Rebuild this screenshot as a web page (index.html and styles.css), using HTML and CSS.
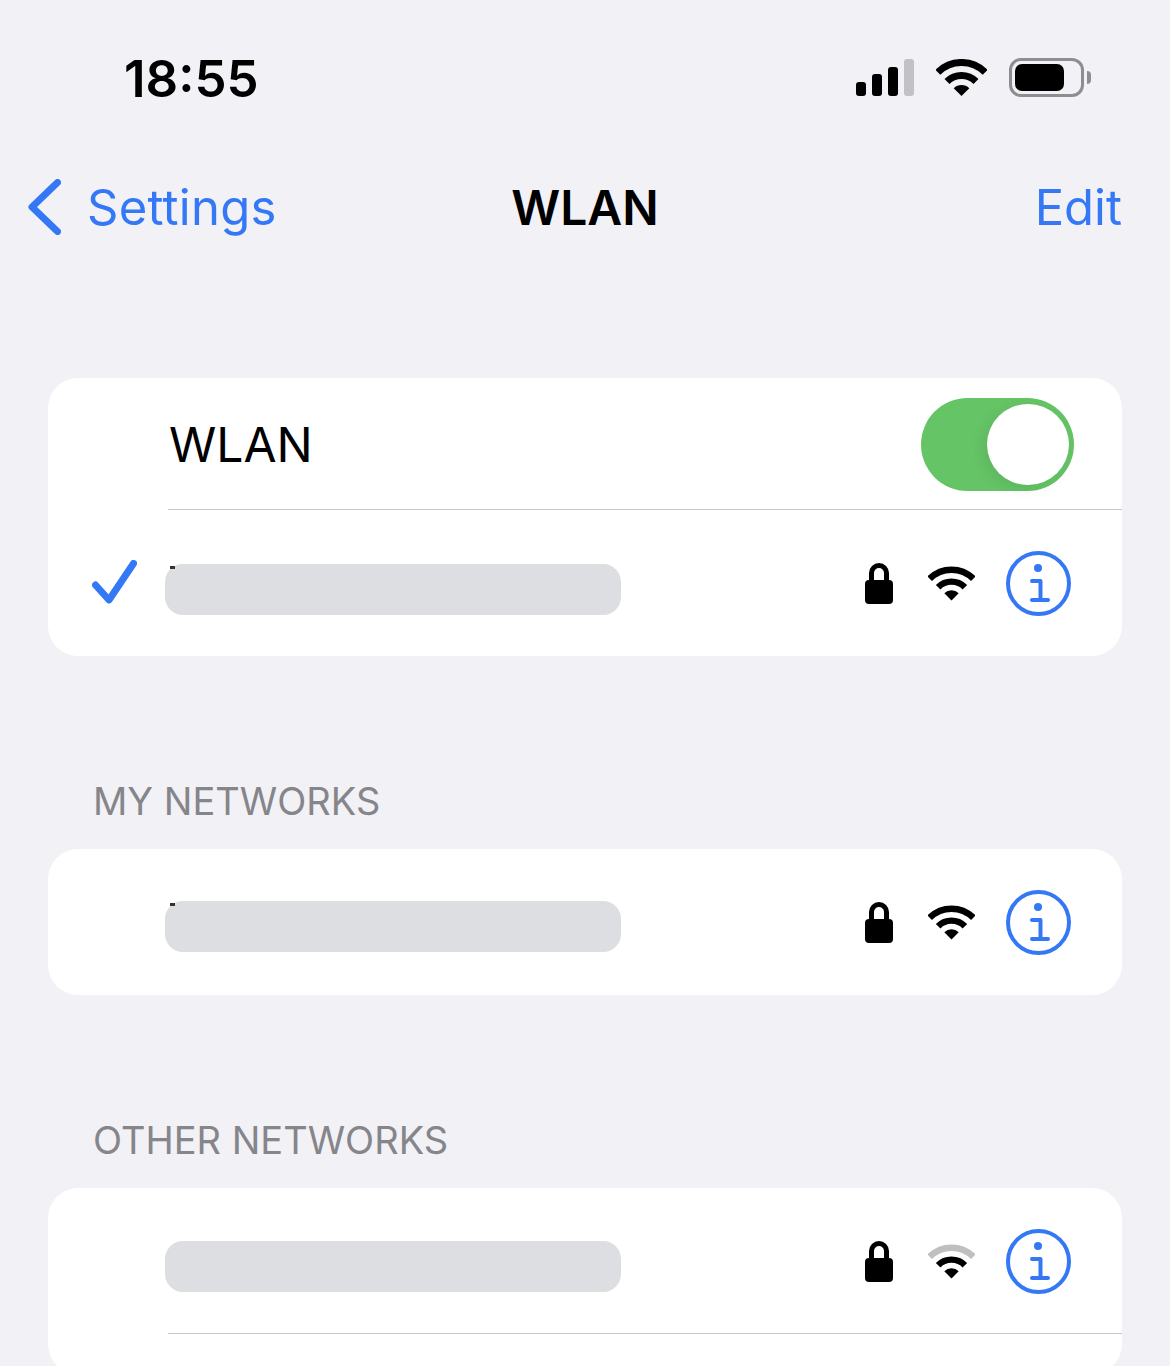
FILE: index.html
```html
<!DOCTYPE html>
<html lang="en">
<head>
  <meta charset="UTF-8">
  <title>WLAN</title>
  <link rel="stylesheet" href="styles.css">
</head>
<body>
  <div class="page">
    <div class="status-bar">
      <span class="time">18:55</span>
      <div class="status-icons">
        <div class="signal">
          <span class="bar bar-1"></span>
          <span class="bar bar-2"></span>
          <span class="bar bar-3"></span>
          <span class="bar bar-4"></span>
        </div>
        <svg class="wifi-status" viewBox="0 0 51 37">
          <path class="arc" d="M1.8 13.3A33.5 33.5 0 0 1 49.2 13.3"/>
          <path class="arc" d="M11 22.5A20.5 20.5 0 0 1 40 22.5"/>
          <path d="M25.5 37L17.7 29.2A11 11 0 0 1 33.3 29.2Z"/>
        </svg>
        <div class="battery"><span class="battery-level"></span></div>
        <span class="battery-nub"></span>
      </div>
    </div>

    <div class="nav-bar">
      <div class="nav-back">
        <svg class="chevron" viewBox="0 0 33 56"><path d="M29.5 3.5L4 28L29.5 52.5"/></svg>
        <span class="nav-back-text">Settings</span>
      </div>
      <div class="nav-title">WLAN</div>
      <div class="nav-edit">Edit</div>
    </div>

    <div class="card card-first">
      <div class="row row-toggle">
        <span class="row-label">WLAN</span>
        <div class="toggle"><span class="knob"></span></div>
      </div>
      <div class="row row-network">
        <svg class="check" viewBox="0 0 45 44"><path d="M3.5 25L17 40L41.5 3.5"/></svg>
        <div class="name-mask has-speck"></div>
        <svg class="lock" viewBox="0 0 28 41">
          <path class="shackle" d="M6.5 20V10a7.5 7.5 0 0 1 15 0V20"/>
          <rect y="17" width="28" height="24" rx="4"/>
        </svg>
        <svg class="wifi" viewBox="0 0 51 37">
          <path class="arc" d="M1.8 13.3A33.5 33.5 0 0 1 49.2 13.3"/>
          <path class="arc" d="M11 22.5A20.5 20.5 0 0 1 40 22.5"/>
          <path d="M25.5 37L17.7 29.2A11 11 0 0 1 33.3 29.2Z"/>
        </svg>
        <svg class="info" viewBox="0 0 65 65">
          <circle class="info-ring" cx="32.5" cy="32.5" r="30.5"/>
          <circle class="info-dot" cx="32" cy="17" r="4"/>
          <path class="info-i" d="M26 30H34.5V49M26 49H42"/>
        </svg>
      </div>
    </div>

    <div class="section-label">MY NETWORKS</div>
    <div class="card">
      <div class="row row-network">
        <div class="name-mask mask-mine has-speck"></div>
        <svg class="lock" viewBox="0 0 28 41">
          <path class="shackle" d="M6.5 20V10a7.5 7.5 0 0 1 15 0V20"/>
          <rect y="17" width="28" height="24" rx="4"/>
        </svg>
        <svg class="wifi" viewBox="0 0 51 37">
          <path class="arc" d="M1.8 13.3A33.5 33.5 0 0 1 49.2 13.3"/>
          <path class="arc" d="M11 22.5A20.5 20.5 0 0 1 40 22.5"/>
          <path d="M25.5 37L17.7 29.2A11 11 0 0 1 33.3 29.2Z"/>
        </svg>
        <svg class="info" viewBox="0 0 65 65">
          <circle class="info-ring" cx="32.5" cy="32.5" r="30.5"/>
          <circle class="info-dot" cx="32" cy="17" r="4"/>
          <path class="info-i" d="M26 30H34.5V49M26 49H42"/>
        </svg>
      </div>
    </div>

    <div class="section-label">OTHER NETWORKS</div>
    <div class="card">
      <div class="row row-network">
        <div class="name-mask mask-other"></div>
        <svg class="lock" viewBox="0 0 28 41">
          <path class="shackle" d="M6.5 20V10a7.5 7.5 0 0 1 15 0V20"/>
          <rect y="17" width="28" height="24" rx="4"/>
        </svg>
        <svg class="wifi" viewBox="0 0 51 37">
          <path class="arc arc-weak" d="M1.8 13.3A33.5 33.5 0 0 1 49.2 13.3"/>
          <path class="arc" d="M11 22.5A20.5 20.5 0 0 1 40 22.5"/>
          <path d="M25.5 37L17.7 29.2A11 11 0 0 1 33.3 29.2Z"/>
        </svg>
        <svg class="info" viewBox="0 0 65 65">
          <circle class="info-ring" cx="32.5" cy="32.5" r="30.5"/>
          <circle class="info-dot" cx="32" cy="17" r="4"/>
          <path class="info-i" d="M26 30H34.5V49M26 49H42"/>
        </svg>
      </div>
      <div class="row row-next"></div>
    </div>
  </div>
</body>
</html>
```

FILE: styles.css
```css
body {
  margin: 0;
  padding: 0;
  font-family: Inter, "Liberation Sans", sans-serif;
  background-color: #f1f1f6;
}

.page {
  height: 1366px;
  overflow: hidden;
}

/* status bar */
.status-bar {
  height: 156px;
  padding: 58px 79px 0 124px;
  box-sizing: border-box;
  display: flex;
  justify-content: space-between;
  align-items: flex-start;
}

.time {
  margin-top: 1px;
  font-size: 51px;
  line-height: 40px;
  font-weight: 600;
  color: #000;
}

.status-icons {
  display: flex;
  align-items: center;
  height: 39px;
}

.signal {
  display: flex;
  align-items: flex-end;
  gap: 6px;
  height: 37px;
  margin-right: 22px;
}

.bar {
  width: 10px;
  border-radius: 3px;
  background-color: #000;
}

.bar-1 { height: 14px; }
.bar-2 { height: 22px; }
.bar-3 { height: 29px; }
.bar-4 { height: 37px; background-color: #c2c2c6; }

.wifi-status {
  width: 51px;
  height: 37px;
  margin-right: 22px;
}

.arc {
  fill: none;
  stroke: #000;
  stroke-width: 7;
}

.arc-weak {
  stroke: #bfbfbf;
}

.battery {
  width: 75px;
  height: 39px;
  box-sizing: border-box;
  border: 3px solid #8e8e92;
  border-radius: 12px;
  padding: 3px;
}

.battery-level {
  display: block;
  width: 49px;
  height: 27px;
  border-radius: 7px;
  background-color: #000;
}

.battery-nub {
  width: 4px;
  height: 13px;
  margin-left: 3px;
  border-radius: 0 4px 4px 0;
  background-color: #8e8e92;
}

/* nav */
.nav-bar {
  height: 102px;
  display: grid;
  grid-template-columns: 1fr auto 1fr;
  align-items: center;
  padding: 0 28px;
  font-size: 49px;
  color: #3478f6;
}

.nav-back {
  display: flex;
  align-items: center;
  gap: 26px;
}

.nav-back-text {
  letter-spacing: 0.25px;
}

.chevron {
  width: 33px;
  height: 56px;
  fill: none;
  stroke: #3478f6;
  stroke-width: 7;
  stroke-linecap: round;
  stroke-linejoin: round;
}

.nav-title {
  font-size: 48px;
  font-weight: 600;
  color: #000;
}

.nav-edit {
  text-align: right;
  padding-right: 20px;
}

/* cards */
.card {
  margin: 0 48px;
  background-color: #fff;
  border-radius: 30px;
  overflow: hidden;
}

.card-first {
  margin-top: 120px;
}

.row {
  display: flex;
  align-items: center;
  box-sizing: border-box;
}

.row-toggle {
  height: 132px;
  padding: 0 48px 0 121px;
  justify-content: space-between;
  position: relative;
}

.row-toggle::after,
.row-next::before {
  content: "";
  position: absolute;
  left: 120px;
  right: 0;
  bottom: 0;
  height: 1px;
  background-color: #c6c6c8;
}

.row-label {
  font-size: 48px;
  color: #000;
}

.toggle {
  width: 153px;
  height: 93px;
  box-sizing: border-box;
  padding: 6px 5px 6px 0;
  border-radius: 47px;
  background-color: #65c466;
  display: flex;
  justify-content: flex-end;
}

.knob {
  width: 82px;
  height: 81px;
  border-radius: 50%;
  background-color: #fff;
  box-shadow: -4px 4px 14px rgba(0, 0, 0, 0.08);
}

.row-network {
  height: 146px;
  position: relative;
  padding-left: 117px;
}

.check {
  position: absolute;
  left: 44px;
  top: 50px;
  width: 45px;
  height: 44px;
  fill: none;
  stroke: #3478f6;
  stroke-width: 7;
  stroke-linecap: round;
  stroke-linejoin: round;
}

.name-mask {
  width: 456px;
  height: 51px;
  margin-top: 13px;
  border-radius: 18px;
  background-color: #dddee1;
  position: relative;
}

.mask-mine {
  margin-top: 9px;
}

.mask-other {
  margin-top: 11px;
}

.has-speck::before {
  content: "";
  position: absolute;
  left: 5px;
  top: 2px;
  width: 5px;
  height: 3px;
  background-color: #333;
}

.lock {
  width: 28px;
  height: 41px;
  margin-left: 244px;
}

.shackle {
  fill: none;
  stroke: #000;
  stroke-width: 5;
}

.wifi {
  width: 47px;
  height: 35px;
  margin-left: 35px;
}

.info {
  width: 65px;
  height: 65px;
  margin-left: 31px;
}

.info-ring {
  fill: none;
  stroke: #3478f6;
  stroke-width: 4;
}

.info-dot {
  fill: #3478f6;
}

.info-i {
  fill: none;
  stroke: #3478f6;
  stroke-width: 4;
  stroke-linecap: round;
  stroke-linejoin: round;
}

.row-next {
  height: 40px;
  position: relative;
}

.row-next::before {
  top: -1px;
  bottom: auto;
}

/* section headers */
.section-label {
  margin: 123px 0 26px;
  padding-left: 93px;
  font-size: 38px;
  line-height: 44px;
  color: #85858a;
}
```
